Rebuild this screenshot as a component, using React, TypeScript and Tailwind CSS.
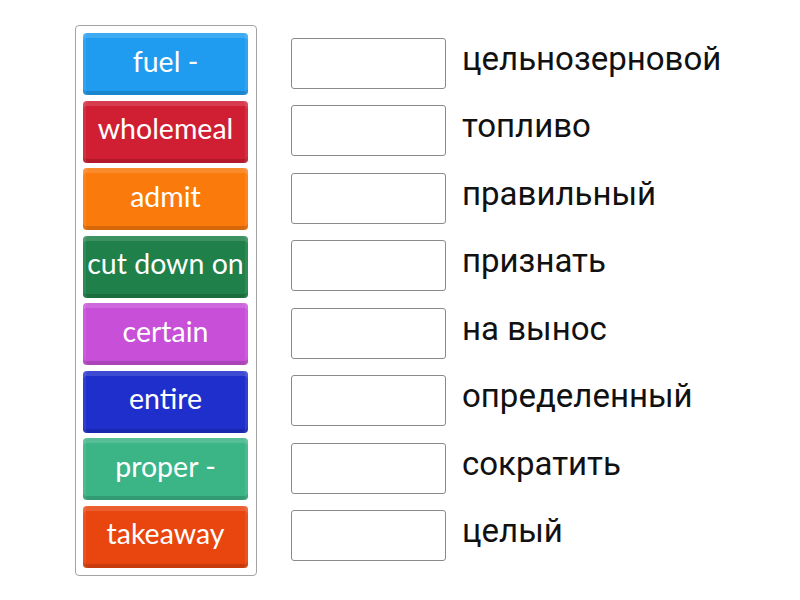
import React from 'react';

const tiles: { label: string; bg: string }[] = [
	{ label: 'fuel -', bg: 'bg-[#1f9cf0]' },
	{ label: 'wholemeal', bg: 'bg-[#d01f33]' },
	{ label: 'admit', bg: 'bg-[#fb7a0c]' },
	{ label: 'cut down on', bg: 'bg-[#1f8049]' },
	{ label: 'certain', bg: 'bg-[#c84fd8]' },
	{ label: 'entire', bg: 'bg-[#1f2fcc]' },
	{ label: 'proper -', bg: 'bg-[#3cb586]' },
	{ label: 'takeaway', bg: 'bg-[#e8450f]' },
];

const words = [
	'цельнозерновой',
	'топливо',
	'правильный',
	'признать',
	'на вынос',
	'определенный',
	'сократить',
	'целый',
];

const Tile: React.FC<{ label: string; bg: string }> = ({ label, bg }) => {
	return (
		<div
			className={`${bg} flex h-[62px] w-[165px] items-center justify-center rounded-[4px] pb-[6px] text-[28.5px] text-white shadow-[inset_0_5px_0_rgba(255,255,255,0.14),inset_3px_0_0_rgba(255,255,255,0.08),inset_-3px_0_0_rgba(255,255,255,0.08),inset_0_-4px_0_rgba(0,0,0,0.14)]`}
			style={{ fontFamily: 'Lato, "Open Sans", sans-serif' }}
		>
			<span className="whitespace-nowrap leading-none">{label}</span>
		</div>
	);
};

export default function App() {
	return (
		<div className="flex h-[600px] w-[800px] bg-white pl-[75px] pt-[25px]">
			<div className="flex h-[551px] w-[182px] flex-col gap-[5.5px] rounded-[4px] border border-[#a3a3a3] px-[7px] pt-[7px]">
				{tiles.map((t) => (
					<Tile key={t.label} label={t.label} bg={t.bg} />
				))}
			</div>
			<div className="ml-[34px] flex flex-col gap-[5.5px] pt-[7px]">
				{words.map((w) => (
					<div key={w} className="flex h-[62px] items-center">
						<div className="h-[51px] w-[155px] rounded-[3px] border border-[#8a8a8a] bg-white" />
						<span
							className="-mt-[10px] ml-[16px] text-[33px] leading-none text-[#111]"
							style={{ fontFamily: 'Roboto, sans-serif' }}
						>
							{w}
						</span>
					</div>
				))}
			</div>
		</div>
	);
}
